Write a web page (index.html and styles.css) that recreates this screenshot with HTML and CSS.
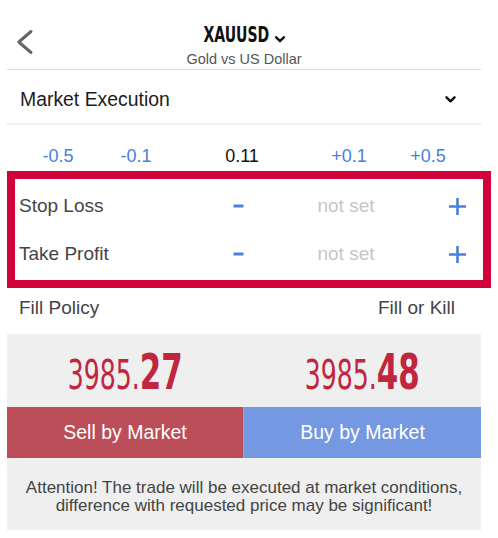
FILE: index.html
```html
<!DOCTYPE html>
<html>
<head>
<meta charset="utf-8">
<link rel="stylesheet" href="styles.css">
</head>
<body>
<div class="page">
  <header class="hdr">
    <div class="back">
      <svg width="18" height="26" viewBox="0 0 18 26"><path d="M15 2.5 L2.8 13 L15 23.5" fill="none" stroke="#666" stroke-width="3" stroke-linecap="round" stroke-linejoin="round"/></svg>
    </div>
    <div class="hdr-center">
      <div class="title-row">
        <span class="title">XAUUSD</span>
        <svg class="tchev" width="10" height="7" viewBox="0 0 10 7"><path d="M1.2 1.3 L5 5.2 L8.8 1.3" fill="none" stroke="#111" stroke-width="2.4" stroke-linecap="round" stroke-linejoin="round"/></svg>
      </div>
      <div class="subtitle">Gold vs US Dollar</div>
    </div>
    <div></div>
  </header>

  <div class="exec-row">
    <span>Market Execution</span>
    <svg width="11" height="7" viewBox="0 0 11 7"><path d="M1.5 1.3 L5.5 5.3 L9.5 1.3" fill="none" stroke="#111" stroke-width="2.4" stroke-linecap="round" stroke-linejoin="round"/></svg>
  </div>

  <div class="lots">
    <span class="step">-0.5</span>
    <span class="step">-0.1</span>
    <span class="lot">0.11</span>
    <span class="step">+0.1</span>
    <span class="step">+0.5</span>
  </div>

  <div class="sltp">
    <div class="sl-row">
      <span class="sl-label">Stop Loss</span>
      <span class="sl-icon"><svg width="11" height="4" viewBox="0 0 11 4"><rect x="0.5" y="0.5" width="10" height="3" fill="#4b80d6"/></svg></span>
      <span class="sl-value">not set</span>
      <span class="sl-icon"><svg width="19" height="19" viewBox="0 0 19 19"><path d="M9.5 1 V18 M1 9.5 H18" stroke="#4b80d6" stroke-width="2.6" fill="none"/></svg></span>
    </div>
    <div class="sl-row">
      <span class="sl-label">Take Profit</span>
      <span class="sl-icon"><svg width="11" height="4" viewBox="0 0 11 4"><rect x="0.5" y="0.5" width="10" height="3" fill="#4b80d6"/></svg></span>
      <span class="sl-value">not set</span>
      <span class="sl-icon"><svg width="19" height="19" viewBox="0 0 19 19"><path d="M9.5 1 V18 M1 9.5 H18" stroke="#4b80d6" stroke-width="2.6" fill="none"/></svg></span>
    </div>
  </div>

  <div class="fill-row">
    <span>Fill Policy</span>
    <span>Fill or Kill</span>
  </div>

  <div class="panel">
    <div class="prices">
      <div class="price"><span class="pv"><span class="p-sm">3985.</span><span class="p-lg">27</span></span></div>
      <div class="price"><span class="pv"><span class="p-sm">3985.</span><span class="p-lg">48</span></span></div>
    </div>
    <div class="btns">
      <div class="btn sell">Sell by Market</div>
      <div class="btn buy">Buy by Market</div>
    </div>
    <div class="note">Attention! The trade will be executed at market conditions,<br>difference with requested price may be significant!</div>
  </div>
</div>
</body>
</html>
```

FILE: styles.css
```css
html, body {
  margin: 0;
  padding: 0;
  background: #fff;
}
body {
  font-family: "Liberation Sans", Arial, sans-serif;
  color: #333;
}
.page {
  margin-left: 7px;
  width: 474px;
}
.hdr {
  display: grid;
  grid-template-columns: 1fr auto 1fr;
  height: 69px;
  border-bottom: 1px solid #dcdcdc;
}
.back svg {
  display: block;
  margin: 29px 0 0 9px;
}
.hdr-center {
  padding-top: 24px;
  display: flex;
  flex-direction: column;
  align-items: center;
}
.title-row {
  display: flex;
  align-items: flex-start;
  height: 22px;
}
.title {
  display: inline-block;
  font-family: "DejaVu Sans Condensed", "DejaVu Sans", sans-serif;
  font-stretch: condensed;
  font-weight: bold;
  font-size: 22px;
  line-height: 22px;
  color: #111;
  transform: scaleX(0.71);
  margin: 0 -13.5px;
}
.tchev {
  display: block;
  margin: 12px 0 0 6px;
}
.subtitle {
  margin-top: 4px;
  font-size: 14.5px;
  line-height: 18px;
  color: #555;
  white-space: nowrap;
}
.exec-row {
  display: flex;
  justify-content: space-between;
  align-items: center;
  padding: 17px 25px 12px 13px;
  font-size: 19.4px;
  line-height: 24px;
  color: #1c1c1c;
  border-bottom: 2px solid #efefef;
}
.exec-row svg {
  display: block;
}
.lots {
  display: grid;
  grid-template-columns: 78px 78px 134px 80px 78px;
  padding: 20px 0 4px 12px;
  font-size: 18px;
  line-height: 22px;
  text-align: center;
}
.step {
  color: #4b80d6;
}
.lot {
  color: #111;
}
.sltp {
  box-sizing: border-box;
  width: 484px;
  border: 8px solid #d2033a;
  padding: 3px 0 2px;
}
.sl-row {
  display: grid;
  grid-template-columns: 200px 46px 170px 1fr;
  height: 48px;
  align-items: center;
  font-size: 19px;
  line-height: 48px;
}
.sl-label {
  padding-left: 4px;
  color: #444;
}
.sl-icon {
  display: flex;
  justify-content: center;
  align-items: center;
}
.sl-icon svg {
  display: block;
}
.sl-value {
  text-align: center;
  color: #c6c6c6;
}
.fill-row {
  display: flex;
  justify-content: space-between;
  padding: 8px 26px 14px 12px;
  font-size: 19px;
  line-height: 24px;
  color: #444;
}
.panel {
  background: #efefef;
}
.prices {
  display: grid;
  grid-template-columns: 1fr 1fr;
  height: 73px;
}
.price {
  text-align: center;
  padding-top: 14px;
  font-family: "DejaVu Sans Condensed", "DejaVu Sans", sans-serif;
  font-stretch: condensed;
  font-size: 49px;
  line-height: 50px;
  color: #c1263e;
}
.pv {
  display: inline-block;
  transform: scaleX(0.7);
  white-space: nowrap;
}
.p-sm {
  font-size: 40px;
}
.p-lg {
  font-size: 49px;
  font-weight: bold;
}
.btns {
  display: grid;
  grid-template-columns: 236px 1fr;
  height: 51px;
}
.btn {
  text-align: center;
  color: #fff;
  font-size: 19.5px;
  line-height: 51px;
}
.sell {
  background: #bb4e58;
}
.buy {
  background: #7598e2;
  border-left: 1px solid #9aa5bd;
}
.note {
  padding: 21px 0 15px;
  text-align: center;
  font-size: 17px;
  line-height: 18px;
  color: #444;
  white-space: nowrap;
}
```
